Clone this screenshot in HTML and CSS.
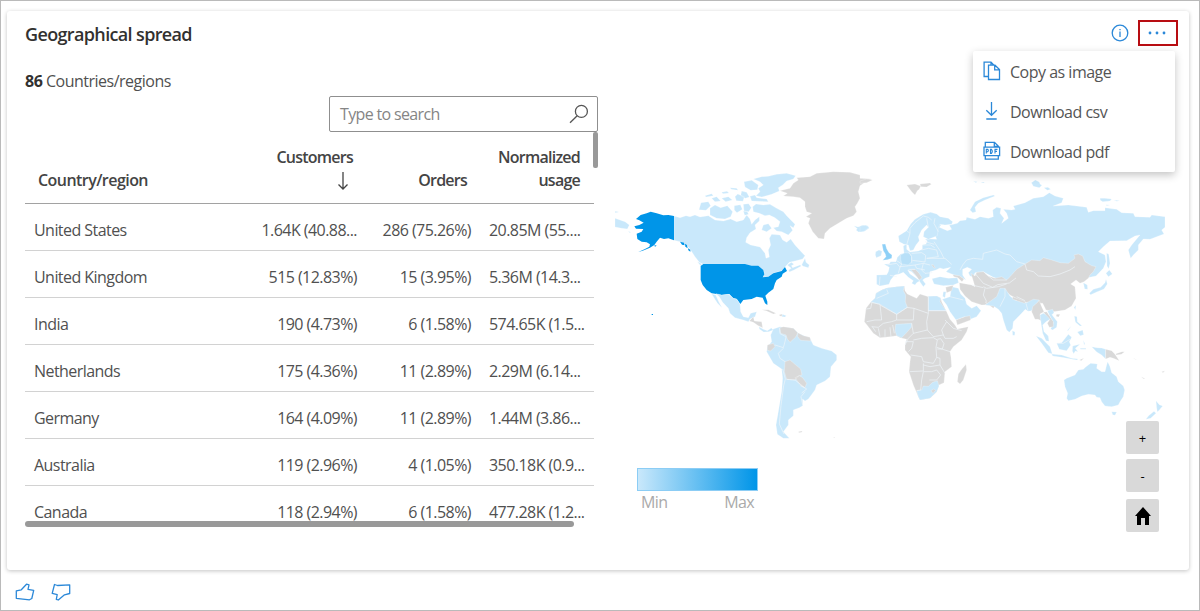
FILE: index.html
```html
<!DOCTYPE html>
<html lang="en">
<head>
<meta charset="utf-8">
<title>Geographical spread</title>
<link rel="stylesheet" href="styles.css">
</head>
<body>
<div class="page">
  <section class="card">
    <header class="card-header">
      <h1 class="title">Geographical spread</h1>
      <svg class="info" width="18" height="18" viewBox="0 0 18 18"><circle cx="9" cy="9" r="7.8"/><path d="M9 7.5V13M9 5v1.3"/></svg>
      <button class="more" aria-label="More options"><svg width="18" height="4" viewBox="0 0 18 4"><circle cx="2" cy="2" r="1.4"/><circle cx="9" cy="2" r="1.4"/><circle cx="16" cy="2" r="1.4"/></svg></button>
      <div class="menu">
        <div class="menu-item"><svg width="18" height="20" viewBox="0 0 18 20"><path d="M5.5 15.5H1.1V1.2H8l3 3M8 1.2v3M5.5 4.2H12l4.5 4.3v10h-11zM11.7 4.2v4.6h4.8"/></svg><span>Copy as image</span></div>
        <div class="menu-item"><svg width="18" height="20" viewBox="0 0 18 20"><path d="M8.5 1v13M3.3 9.3l5.2 5 5.2-5M3.3 18h10.4"/></svg><span>Download csv</span></div>
        <div class="menu-item"><svg width="18" height="20" viewBox="0 0 18 20"><path d="M2.3 6.2V1.3h9.2l3.9 3.9v1M11.3 1.3v4h4M1 6.2h15.6v8.4H1zM2.3 14.6v3.6h13v-3.6"/><path class="thin" d="M3.3 12.5V8.4h1.5q1.2 1.2 0 2.3H3.3M7.5 8.4v4h1q1.6-2 0-4zM12 12.5V8.4h2.5M12 10.4h2"/></svg><span>Download pdf</span></div>
      </div>
    </header>
    <div class="content">
      <div class="list">
        <p class="summary"><b>86</b> Countries/regions</p>
        <div class="search"><span>Type to search</span><svg width="20" height="20" viewBox="0 0 20 20"><circle cx="12.4" cy="7.4" r="6"/><path d="M8.2 11.7L1 18.8"/></svg></div>
        <div class="table">
          <div class="row head"><span>Country/region</span><span class="sorted">Customers<svg width="12" height="20" viewBox="0 0 12 20"><path d="M6 1v17M1.5 13.5L6 18l4.500-4.500"/></svg></span><span>Orders</span><span>Normalized<br>usage</span></div>
          <div class="row"><span>United States</span><span>1.64K (40.88...</span><span>286 (75.26%)</span><span>20.85M (55....</span></div>
          <div class="row"><span>United Kingdom</span><span>515 (12.83%)</span><span>15 (3.95%)</span><span>5.36M (14.3...</span></div>
          <div class="row"><span>India</span><span>190 (4.73%)</span><span>6 (1.58%)</span><span>574.65K (1.5...</span></div>
          <div class="row"><span>Netherlands</span><span>175 (4.36%)</span><span>11 (2.89%)</span><span>2.29M (6.14...</span></div>
          <div class="row"><span>Germany</span><span>164 (4.09%)</span><span>11 (2.89%)</span><span>1.44M (3.86...</span></div>
          <div class="row"><span>Australia</span><span>119 (2.96%)</span><span>4 (1.05%)</span><span>350.18K (0.9...</span></div>
          <div class="row last"><span>Canada</span><span>118 (2.94%)</span><span>6 (1.58%)</span><span>477.28K (1.2...</span></div>
          <i class="vbar"></i>
        </div>
        <div class="hbar"></div>
      </div>
      <div class="map-panel">
        <svg class="map" width="580" height="280" viewBox="600 165 580 280">
          <!-- North America -->
          <g transform="translate(600 165) scale(.33333)">
            <path class="on" d="M45 160L60 165 75 170 88 180 82 192 65 190 45 186zM45 139l10 1v2l-10 1zM84 199l8 2-2 3z"/>
            <path class="on" d="M222 153L240 158 258 152 270 155 285 150 300 156 325 152 345 165 370 168 392 162 410 170 430 165 440 150 450 162 455 178 465 165 478 155 478 168 465 180 468 192 450 203 440 218 437 232 452 240 480 246 495 265 498 280 508 276 505 255 512 240 508 220 515 208 540 210 548 225 560 232 572 222 585 240 605 262 615 272 608 282 585 288 568 292 556 305 548 316 520 325 505 335 488 337 493 326 490 315 475 303 455 303 435 298 310 298 298 292 285 275 272 255 258 238 240 230 222 226z"/>
            <path class="on" d="M562 300l12-8 8 6-8 4 4 6 22-8 4 3-22 12-14 6-2-6 8-5zM605 300l10-20 3 12 10 8-3 8-15-4zM292 290l10 5 6 10-8-5z"/>
            <path class="on" d="M303 113L325 110 332 122 318 136 297 134zM330 130L345 120 362 128 382 122 398 140 392 155 375 162 350 160 330 150zM335 100L350 95 362 108 345 110zM315 92l20-6 5 6-22 4zM365 100l20-5 12 10-20 5zM405 95l8-8 20 8-4 14-20-2zM390 68l20 2 4 6-20-3zM365 82l16-3 6 5-18 2zM403 122l18-3 6 14-16 10-8-8zM430 118l16-2 8 12-8 12-14-2zM430 138l12 2 4 8-12 3zM432 50L455 46 475 60 472 74 452 76 435 66zM425 78l15 4 8 14-12 4-14-8zM450 94l15-4 5 8 30 4 5 8-50-2zM460 42L485 35 505 34 530 28 560 25 587 32 580 42 560 48 548 60 535 68 538 78 515 88 485 96 468 92 480 80 475 70 490 60 480 50z"/>
            <path class="on" d="M458 125L468 117 490 120 510 118 530 130 550 140 560 152 585 178 580 188 570 182 578 196 565 210 545 200 530 198 520 188 535 185 540 170 525 158 508 150 495 152 478 145 460 140zM490 180L505 176 515 190 500 200 485 195z"/>
            <path class="hot" d="M222 153L205 150 190 151 170 145 152 140 140 145 122 150 108 162 118 166 131 173 118 180 103 184 108 191 130 192 125 200 110 206 112 222 125 230 140 232 150 238 148 245 135 252 115 261 128 257 150 248 163 240 170 230 180 218 192 222 205 220 222 226zM162 242l8-2-4 5zM240 230l12 3 2 8-8-2zM255 236l6 4 2 10-7-5zM264 250l7 4v6l-6-4zM155 447h4v3h-4z"/>
            <path class="hot" d="M302 303L310 297 435 297 455 302 475 302 490 315 493 328 488 337 505 335 520 325 545 318 555 306 561 318 548 326 545 335 530 345 525 355 520 372 505 383 496 392 502 410 502 420 495 415 488 398 470 395 455 402 430 405 421 417 410 402 400 400 388 387 365 390 345 386 335 385 320 375 308 360 302 345z"/>
            <path class="on" d="M348 386L365 390 385 388 400 400 410 402 420 417 422 440 430 455 445 458 452 445 470 440 465 455 450 462 445 470 430 465 405 458 390 445 385 430 368 412 358 395zM335 387L347 390 357 412 366 428 352 414z"/>
            <path class="off" d="M448 468L460 455 463 468 485 470 488 488 475 482 460 472zM485 434L505 434 528 445 520 447 500 438zM538 449l8-2v7l-7-1z"/>
            <path class="on" d="M547 448l12 4-4 4-9-1zM477 485l13 8 12 4 12-8 6 6-14 5-15 1-13-9z"/>
          </g>
          <!-- Greenland, Iceland, South America -->
          <g transform="translate(750 165) scale(.33333)">
            <path class="off" d="M90 77L120 70 130 55 145 45 140 38 180 35 200 25 250 20 300 22 330 30 330 40 365 42 345 52 330 62 325 80 330 100 322 115 315 125 320 140 310 152 290 160 265 175 240 190 225 205 222 222 205 220 188 200 175 175 180 160 168 155 185 145 170 140 165 125 165 110 150 98 130 95 100 93 112 85z"/>
            <path class="on" d="M312 182l12 4 14-5 15 1 5 7-14 10-18 2-8-6 4-4z"/>
            <path class="on" d="M70 492L90 485 100 487 130 490 145 505 180 520 190 540 215 550 245 558 260 570 260 585 243 605 240 635 225 648 200 660 195 675 175 702 165 708 158 702 158 722 148 728 130 735 130 752 115 765 115 780 100 800 118 820 100 820 82 808 78 780 85 740 95 680 98 640 95 612 70 595 50 560 52 545 65 530 62 510z"/>
            <path class="off" d="M90 488L100 485 130 490 143 503 138 515 120 532 112 522 108 510 92 505zM143 503L160 512 180 517 182 528 152 526 143 515zM52 540L70 535 75 545 62 558 52 556zM105 590L120 585 135 598 152 612 156 630 145 633 135 645 110 643 103 620zM135 638L148 632 158 638 170 655 165 668 152 662zM145 800l10-2 2 3-10 2zM250 816l5 1-2 2z"/>
            <path class="line" d="M88 488L90 506 108 515 105 530 100 548 75 540M100 550L85 565 90 580 105 590M98 612l8 30-5 20-8 60-5 55 14 30M165 680l-12 15 5 25M152 662l18 10-15 12M110 643l25 2 30 24"/>
          </g>
          <!-- Europe and Asia -->
          <g transform="translate(860 170) scale(.33333)">
            <path class="on" d="M50 315L80 314 85 305 88 292 72 283 88 281 92 275 108 275 112 262 122 252 132 250 130 228 140 222 140 238 150 246 175 243 187 238 187 225 198 222 202 213 195 208 213 207 230 208 225 195 232 165 245 163 238 172 262 182 275 178 268 166 292 160 300 152 318 150 320 142 345 148 360 140 385 145 400 140 398 120 410 112 423 115 420 130 432 145 425 160 445 145 440 130 430 118 455 120 465 118 460 108 495 98 520 85 550 80 568 68 585 78 610 85 605 98 580 108 625 105 650 108 680 112 685 127 700 122 735 122 735 113 770 118 785 128 820 130 825 140 870 142 875 135 915 140 915 172 905 180 912 192 890 200 870 208 850 207 835 225 835 240 820 255 812 265 805 240 815 225 840 195 825 198 800 212 750 213 730 230 715 245 735 255 738 275 730 295 708 318 600 340 440 335 400 322 370 305 345 308 340 322 330 318 325 308 335 298 322 292 308 298 308 315 318 330 300 320 280 314 258 305 272 292 250 297 240 294 228 300 210 305 208 320 195 325 188 330 197 342 190 350 180 336 172 322 155 305 143 300 150 312 180 332 170 338 165 345 155 340 160 332 145 322 130 307 118 312 104 315 92 330 87 343 60 348 50 343z"/>
            <path class="on" d="M115 198L140 182 152 162 165 148 190 133 212 127 230 132 240 140 265 145 278 155 275 163 255 165 240 163 235 172 232 197 205 208 190 200 192 185 205 172 200 165 185 180 175 200 178 212 168 225 160 240 150 242 145 225 132 223 118 215zM330 120L345 95 370 83 400 75 405 78 375 90 355 100 345 112 348 125 338 128zM340 34l12 1-4 3zM362 36h12l-4 3zM514 38l12-8 12 6 2 6 6 4-8 7-18-4zM552 53l12-1 8 6-10 3zM720 85l15 0 20 2-5 6-22 2-7-4zM762 90l18 2-10 2zM738 104l12 1-10 2zM0 168l18-2 8 7-14 11-12 2z"/>
            <path class="on" d="M47 245L57 240 66 244 63 257 49 263 46 255zM740 250L746 252 750 280 746 296 741 288zM738 310L748 300 757 312 745 320zM688 370L700 358 722 352 735 338 738 328 742 342 732 357 712 365 692 374zM670 338L682 345 683 358 674 357z"/>
            <path class="warm2" d="M122 255L135 248 150 250 155 260 155 275 145 285 125 282 122 268z"/>
            <path class="warm" d="M66 223L76 222 80 236 87 248 96 255 95 265 82 269 68 271 78 260 76 252 70 242z"/>
            <path class="on" d="M216 326L240 320 265 325 292 323 296 338 280 345 250 347 222 342z"/>
            <path class="off" d="M140 45L165 42 182 48 178 58 172 62 165 75 155 65zM180 42l30-3 4 4-14 8-18-1zM0 33l20-6 18 3-18 8-20 2zM152 298l14 0 10 10 10 15-8 7-12-16zM214 284l6 0 6 10-4 0zM278 314l20 3 14 10-6 8-12-12-12-3z"/>
            <path class="off" d="M333 310L345 318 350 307 370 305 385 318 405 325 425 320 440 330 450 320 470 298 495 282 515 270 540 272 550 263 575 270 600 278 625 280 645 265 642 255 655 252 668 258 675 275 695 287 708 290 700 305 690 315 685 325 672 335 660 340 648 330 632 342 645 350 648 385 635 408 615 420 580 425 558 420 548 400 500 398 480 392 450 375 430 358 420 370 418 385 400 415 375 395 385 404 365 405 335 395 315 378 300 358 298 338 335 345 345 350z"/>
            <path class="line" d="M300 300L308 285 320 270 340 265 368 268 370 250 410 240 435 252 450 255 470 275 495 282 500 300 520 305 535 318 570 320 600 312 630 300 645 290M345 310l25 30 28 12 15 -8 35 -5 20-15M375 310l25 20 40 0M370 350l10 5 35-5 25-8M375 355l-5 20 10 20M335 345l35 8M140 182L150 190 150 175 165 158 190 138 205 142 215 150M205 172L200 145M225 145L222 160 235 185M140 225L150 190M80 285L110 280 120 292 115 310M110 272l15 10-5 10M145 245l10 15 0 18M155 250l30-2 12 8-2 20-38-5M185 240l20-5 25 5 5 20-35 5M187 225l25 0 12 8M195 215l28 8M120 290l20-2 25-3 25-5 20 5M165 285l5 10 25 5M200 265l25 0 30 0 20 18M222 215l20 30 10 20M190 280l-5 20 10 10 22-2M60 320l-2 25M90 316l20 4M470 380l25 12M145 298l20 0"/>
          </g>
          <!-- Africa and the Middle East -->
          <g transform="translate(850 270) scale(.33333)">
            <path class="off" d="M62 97L75 85 78 70 95 60 110 54 140 50 163 48 165 62 172 72 200 85 210 72 235 80 260 78 272 84 275 95 290 125 300 148 315 165 322 177 355 170 350 185 335 210 310 230 300 245 303 262 305 290 285 305 282 338 267 345 260 365 240 385 210 390 205 380 190 345 177 305 180 275 182 260 165 240 165 225 170 208 150 203 140 197 120 200 90 203 70 190 55 170 43 155 48 115zM348 283L350 300 340 330 330 342 322 335 325 312 335 298z"/>
            <path class="on" d="M62 97L75 85 78 70 95 60 110 54 140 50 163 48 160 62 167 75 166 95 172 112 140 133 90 103zM235 79L260 78 272 84 270 95 288 122 235 122zM137 163L185 160 184 172 168 190 155 203 140 197 135 182zM200 362L215 360 220 348 235 349 248 337 262 332 267 348 260 365 240 385 210 390 205 380z"/>
            <path class="on" d="M277 88L300 80 305 50 325 55 332 72 345 85 350 103 365 115 380 107 393 122 380 140 355 150 345 140 318 150 300 125 290 105zM280 65l8 0-3 18-7-4z"/>
            <path class="off" d="M287 52L310 46 305 62 290 68zM318 150L345 140 360 137 362 150 322 165zM243 362l8-5 6 4-8 9z"/>
            <path class="line" d="M48 117L62 115 66 97 90 103 95 150 75 150 50 155M90 105L140 133 140 150 125 155 100 160 85 172 65 170M140 150L190 150 192 115 170 112M192 115L235 130 235 80M235 130L230 155 232 180 190 190 185 160M235 122L290 122M190 190L175 205 165 225M232 180L250 200 280 195 275 180 290 155 285 150M290 155L310 175 335 182M280 195L285 205 310 205 320 200M190 210L215 205 250 203 262 210 258 232 260 262 250 280 220 275 215 260 182 255M260 232L300 245M178 305L220 303 220 280M220 285L240 290 270 285 270 265 260 262M270 285L285 310M220 305L215 330 212 360 200 362M220 305l25 0 15 -5 12 15 -12 15-22 0M85 175l5 25M105 178l0 22M120 172l3 28M128 165l5 25M262 208l10-2 10 15-5 16M277 237l-15 0M165 215l25 0-5 20-10 10M140 133l32-21M80 85l35-15-5-12M67 170l10 15M300 80l40 10"/>
          </g>
          <!-- South Asia and Oceania -->
          <g transform="translate(1000 280) scale(.33333)">
            <path class="on" d="M-45 75L-10 50 0 25 15 25 30 48 45 60 80 68 100 58 118 60 108 74 95 92 84 94 76 88 60 105 40 125 38 145 28 157 20 150 10 120 5 100 -5 88 -20 78zM37 152l8 4-1 10-6 0z"/>
            <path class="off" d="M98 80L118 62 125 80 132 95 120 102 124 122 115 118 105 118 95 95zM38 50l38 15-2 5-36-12zM170 103l10 0-4 8-8-2z"/>
            <path class="on" d="M120 105L130 100 150 108 150 118 138 125 128 135 132 155 145 168 147 184 138 182 128 160 124 135zM142 92L158 88 162 98 156 104 172 125 170 142 158 150 152 147 160 128 148 105zM108 168L125 175 150 200 157 222 145 218 125 190zM155 222L185 225 215 235 235 237 230 240 185 232 158 228zM170 190L185 188 205 163 215 172 208 185 212 195 200 212 178 208zM218 198l22-5-14 12 8 10-8-2-5 8-4-8zM223 108l8 2 1 15 14 12-6 1-14-12zM232 156l16-6 3 14-10 3zM222 82l6-6-2 14zM214 138l-10 14-2-1zM250 180l5 12-3 2zM240 205l18 0 0 3-16 0zM275 200L290 203 305 204 317 208 317 237 305 225 290 216z"/>
            <path class="off" d="M130 97L140 95 160 125 160 140 148 142 142 130 150 118zM317 208L335 212 345 223 358 242 340 235 330 232 317 237zM348 221l18-6 8 0-10 8-16 2zM238 240l14-6-8 8zM424 290l12 6-6 0zM485 275l10-3-6 6zM400 234l10 5-5-1z"/>
            <path class="on" d="M192 300L200 295 225 285 235 270 250 268 258 260 272 250 292 252 290 265 305 275 315 275 320 255 323 245 330 260 335 278 350 290 355 305 370 318 374 330 370 350 360 365 355 375 335 380 315 378 305 365 300 353 290 352 285 345 265 343 245 348 225 358 205 362 200 355 203 340 195 320zM335 395L350 396 345 406 338 404zM468 362L478 374 488 378 478 390 472 396 470 384zM462 394L468 400 452 415 438 418 445 408z"/>
            <path class="line" d="M15 25L15 50 0 80M78 70l6 22M172 190l18 0 20-12"/>
          </g>
        </svg>
        <div class="controls">
          <div class="legend"><div class="ramp"></div><div class="labels"><span>Min</span><span>Max</span></div></div>
          <div class="zoom">
            <button>+</button><button>-</button>
            <button class="home" aria-label="Reset map"><svg width="18" height="20" viewBox="0 0 18 20"><path d="M9 1L1 10h2v9h4v-7h4v7h4v-9h2z"/></svg></button>
          </div>
        </div>
      </div>
    </div>
  </section>
  <footer class="feedback">
    <svg width="20" height="18" viewBox="0 0 20 18"><path d="M1.300 7.800L6.300 6.800 11.500 1.200 14 1.800 13 6.300 18.700 7.300 16.800 15.500 14.500 16.800 1.300 15.300z"/></svg>
    <svg width="20" height="18" viewBox="0 0 20 18"><path d="M3.500 1.500L6.500 2.500 18.700 1.800V10.500L13.500 11.800 7.300 17 5.300 16.300 6.200 11.600 1.200 10.300z"/></svg>
  </footer>
</div>
</body>
</html>
```
FILE: styles.css
```css
* { box-sizing: border-box; }
body { margin: 0; font: 16px/22px "Open Sans", "Noto Sans", sans-serif; color: #505050; background: #fff; }
button { padding: 0; border: 0; font: inherit; color: #000; }
.page { width: 1200px; height: 611px; border: 1px solid #bababa; padding: 10px 10px 0 6px; overflow: hidden; }
.card { width: 1182px; height: 559px; border-radius: 3px; box-shadow: 0 1px 4px rgba(0,0,0,.24); background: #fff; }
.card-header { position: relative; display: flex; align-items: center; height: 46px; padding: 0 11px 0 18px; }
.title { flex: 1; margin: 0; font-size: 18px; font-weight: 600; line-height: 24px; letter-spacing: -.64px; color: #323130; }
.info { margin: 0 9px 2px 0; fill: none; stroke: #2b88d8; stroke-width: 1.3; }
.more { display: grid; place-items: center; width: 40px; height: 26px; border: 2px solid #b80d12; background: #fff; fill: #2b88d8; margin-bottom: 2px; padding-right: 3px; }
.menu { position: absolute; z-index: 2; left: 966px; top: 40px; width: 202px; height: 121px; background: #fff; border-radius: 2px; box-shadow: 0 3px 9px rgba(0,0,0,.24); }
.menu-item { display: flex; align-items: center; gap: 9px; height: 40px; padding-left: 10px; letter-spacing: -.5px; color: #555; }
.menu-item span { padding-top: 1px; }
.menu-item svg { fill: none; stroke: #2b88d8; stroke-width: 1.3; }
.menu-item .thin { stroke-width: 1.1; }
.content { display: flex; }
.list { width: 591px; padding-left: 18px; }
.summary { margin: 0; padding-top: 13px; height: 39px; letter-spacing: -.5px; }
.summary b { color: #323130; }
.search { display: flex; align-items: center; justify-content: space-between; width: 269px; height: 36px; margin-left: 304px; border: 1px solid #8f8f8f; border-radius: 2px; padding: 0 8px 0 10px; color: #858585; letter-spacing: -.65px; }
.search svg { fill: none; stroke: #555; stroke-width: 1.3; }
.table { position: relative; width: 569px; }
.row { display: grid; grid-template-columns: 220px 112px 114px 123px; align-items: center; height: 47px; padding-top: 6px; border-bottom: 1px solid #d2d2d2; letter-spacing: -.55px; white-space: nowrap; }
.row span { text-align: right; }
.row span:first-child { text-align: left; padding-left: 9px; }
.row span:last-child { text-align: left; padding-left: 18px; }
.head { height: 72px; align-items: end; padding: 0 0 11px; border-color: #a2a2a2; font-weight: 600; color: #444; line-height: 23px; }
.row.head span:first-child { padding-left: 13px; }
.row.head span:last-child { text-align: right; padding-right: 14px; }
.row.head span:nth-child(2), .row.head span:nth-child(3) { padding-right: 4px; }
.row.head span:nth-child(n+2) { letter-spacing: -.75px; }
.sorted svg { display: block; margin: 1px 4px 0 auto; fill: none; stroke: #444; stroke-width: 1.3; height: 22px; }
.last { height: 35px; border: 0; align-items: start; padding-top: 15px; }
.vbar { position: absolute; right: -4px; top: 0; width: 5px; height: 36px; border-radius: 2px; background: #999; }
.hbar { position: relative; width: 549px; height: 6px; border-radius: 3px; background: #999; }
.map-panel { width: 582px; padding: 108px 0 0 2px; }
.map { display: block; }
.map path { stroke: #fff; stroke-opacity: .75; stroke-width: 1; stroke-linejoin: round; }
.map .on { fill: #c9e8fb; }
.map .off { fill: #d9d9d9; }
.map .hot { fill: #0095e8; stroke: none; }
.map .warm { fill: #8ed0f7; }
.map .warm2 { fill: #b8e0f8; }
.map .line { fill: none; stroke: #f0f6fa; stroke-opacity: 1; stroke-width: 2; }
.controls { display: flex; justify-content: space-between; padding: 0 21px 0 37px; margin-top: -24px; }
.legend { width: 121px; padding-top: 47px; color: #aaa; }
.ramp { height: 23px; border: 1px solid #8ccdf5; background: linear-gradient(90deg, #c9e8fb, #0095e8); }
.labels { display: flex; justify-content: space-between; padding: 0 4px; letter-spacing: -.6px; }
.zoom { display: grid; gap: 5px; align-content: start; }
.zoom button { display: grid; place-items: center; width: 33px; height: 33px; border-radius: 2px; background: #d9d9d9; font-size: 13px; }
.zoom .home { margin-top: 2px; }
.feedback { display: flex; gap: 16px; padding: 13px 0 0 8px; }
.feedback svg { fill: none; stroke: #2b88d8; stroke-width: 1.3; stroke-linejoin: round; }
```
